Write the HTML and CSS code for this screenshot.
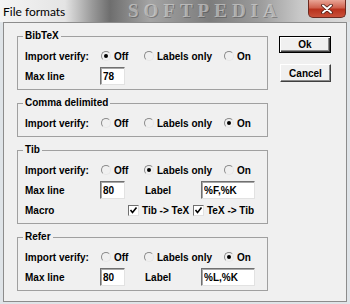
FILE: index.html
```html
<!DOCTYPE html>
<html lang="en">
<head>
    <meta charset="UTF-8">
    <title>File formats</title>
    <link rel="stylesheet" href="styles.css">
</head>
<body>
    <div class="window">
        <div class="titlebar">
            <span class="title">File formats</span>
            <span class="watermark">SOFTPEDIA</span>
            <span class="close">
                <svg width="12" height="10" viewBox="0 0 12 10">
                    <path d="M2 1.5 L10 8.5 M10 1.5 L2 8.5" stroke="#4a1a12" stroke-width="3.6" stroke-linecap="round"/>
                    <path d="M2 1.5 L10 8.5 M10 1.5 L2 8.5" stroke="#fff" stroke-width="2" stroke-linecap="round"/>
                </svg>
            </span>
        </div>

        <div class="client">
            <div class="groups">
                <!-- BibTeX -->
                <fieldset class="group">
                    <legend>BibTeX</legend>
                    <div class="row">
                        <span class="label">Import verify:</span>
                        <div class="choices">
                            <span class="radio checked"><span class="dot"></span>Off</span>
                            <span class="radio"><span class="dot"></span>Labels only</span>
                            <span class="radio"><span class="dot"></span>On</span>
                        </div>
                    </div>
                    <div class="row">
                        <span class="label">Max line</span>
                        <input class="field short" type="text" value="78">
                    </div>
                </fieldset>

                <!-- Comma delimited -->
                <fieldset class="group">
                    <legend>Comma delimited</legend>
                    <div class="row">
                        <span class="label">Import verify:</span>
                        <div class="choices">
                            <span class="radio"><span class="dot"></span>Off</span>
                            <span class="radio"><span class="dot"></span>Labels only</span>
                            <span class="radio checked"><span class="dot"></span>On</span>
                        </div>
                    </div>
                </fieldset>

                <!-- Tib -->
                <fieldset class="group">
                    <legend>Tib</legend>
                    <div class="row">
                        <span class="label">Import verify:</span>
                        <div class="choices">
                            <span class="radio"><span class="dot"></span>Off</span>
                            <span class="radio checked"><span class="dot"></span>Labels only</span>
                            <span class="radio"><span class="dot"></span>On</span>
                        </div>
                    </div>
                    <div class="row">
                        <span class="label">Max line</span>
                        <input class="field short" type="text" value="80">
                        <span class="field-label">Label</span>
                        <input class="field wide" type="text" value="%F,%K">
                    </div>
                    <div class="row">
                        <span class="label">Macro</span>
                        <div class="checks">
                            <span class="check"><span class="box"><svg width="9" height="9" viewBox="0 0 9 9"><path d="M1.5 4 L3.5 6.5 L7.5 1.5" fill="none" stroke="#000" stroke-width="1.6"/></svg></span>Tib -&gt; TeX</span>
                            <span class="check"><span class="box"><svg width="9" height="9" viewBox="0 0 9 9"><path d="M1.5 4 L3.5 6.5 L7.5 1.5" fill="none" stroke="#000" stroke-width="1.6"/></svg></span>TeX -&gt; Tib</span>
                        </div>
                    </div>
                </fieldset>

                <!-- Refer -->
                <fieldset class="group">
                    <legend>Refer</legend>
                    <div class="row">
                        <span class="label">Import verify:</span>
                        <div class="choices">
                            <span class="radio"><span class="dot"></span>Off</span>
                            <span class="radio"><span class="dot"></span>Labels only</span>
                            <span class="radio checked"><span class="dot"></span>On</span>
                        </div>
                    </div>
                    <div class="row">
                        <span class="label">Max line</span>
                        <input class="field short" type="text" value="80">
                        <span class="field-label">Label</span>
                        <input class="field wide" type="text" value="%L,%K">
                    </div>
                </fieldset>
            </div>

            <div class="buttons">
                <button class="btn default">Ok</button>
                <button class="btn cancel">Cancel</button>
            </div>
        </div>
    </div>
</body>
</html>
```

FILE: styles.css
```css
body {
    margin: 0;
    font-family: "Liberation Sans", Arial, sans-serif;
    font-size: 10px;
    font-weight: bold;
    color: #000;
}

.window {
    width: 350px;
    height: 304px;
    box-sizing: border-box;
    background: #dfe4e8;
    display: flex;
    flex-direction: column;
}

/* Title bar */
.titlebar {
    position: relative;
    flex: none;
    height: 22px;
    display: flex;
    align-items: center;
    background: linear-gradient(to right, #f4f4f4 0px, #e4e4e4 65px, #9a9a9a 92px, #6e6e6e 110px, #a4a4a4 150px, #7c7c7c 210px, #9c9c9c 260px, #c8c8c8 300px, #dcdcdc 350px);
}

.title {
    position: relative;
    z-index: 1;
    padding-left: 3px;
    font-family: Lato, "Liberation Sans", sans-serif;
    font-weight: normal;
    font-size: 12px;
    color: #000;
}

.watermark {
    position: absolute;
    left: 128px;
    top: 1px;
    font-family: "Liberation Serif", serif;
    font-size: 19px;
    line-height: 20px;
    font-weight: bold;
    letter-spacing: 5px;
    color: rgba(225, 225, 225, 0.55);
    text-shadow: 1px 1px 0 rgba(60, 60, 60, 0.4);
}

.close {
    position: absolute;
    right: 4px;
    top: 0;
    width: 38px;
    height: 18px;
    box-sizing: border-box;
    border: 1px solid #6b2a20;
    border-top: none;
    border-radius: 0 0 5px 5px;
    background: linear-gradient(#e9a596, #d0624f 45%, #b9321d 55%, #c9503a);
    display: flex;
    align-items: center;
    justify-content: center;
}

/* Client area */
.client {
    flex: 1;
    margin: 0 3px 2px 3px;
    border: 1px solid #8c8c8c;
    background: #f0f0f0;
    display: flex;
    gap: 11px;
    padding: 7px 0 0 13px;
}

.groups {
    width: 251px;
    display: flex;
    flex-direction: column;
    gap: 7px;
}

.group {
    margin: 0;
    padding: 4px 6px 3px 7px;
    border: 1px solid #a0a0a0;
}

.group legend {
    margin-left: -2px;
    padding: 0 2px;
    line-height: 12px;
}

.row {
    display: flex;
    align-items: center;
    height: 20px;
}

.label {
    flex: none;
    width: 75px;
}

.choices {
    display: grid;
    grid-template-columns: 43px 80px auto;
    padding-left: 1px;
}

.radio {
    display: flex;
    align-items: center;
    gap: 3px;
}

.dot {
    position: relative;
    width: 10px;
    height: 10px;
    box-sizing: border-box;
    border-radius: 50%;
    border: 1px solid;
    border-color: #8a8a8a #e6e6e6 #e6e6e6 #8a8a8a;
}

.radio.checked .dot::after {
    content: "";
    position: absolute;
    left: 2px;
    top: 2px;
    width: 4px;
    height: 4px;
    border-radius: 50%;
    background: #000;
}

.field {
    height: 18px;
    box-sizing: border-box;
    margin: 0;
    padding: 0 2px;
    border: 1px solid;
    border-color: #707070 #e2e2e2 #e2e2e2 #707070;
    box-shadow: inset 1px 1px 0 #a8a8a8;
    background: #fff;
    font: inherit;
    color: #000;
}

.short {
    width: 25px;
}

.wide {
    width: 54px;
}

.field-label {
    width: 56px;
    margin-left: 20px;
}

.checks {
    display: flex;
    margin-left: 28px;
}

.check {
    display: flex;
    align-items: center;
    gap: 3px;
    width: 65px;
}

.box {
    width: 11px;
    height: 11px;
    box-sizing: border-box;
    border: 1px solid;
    border-color: #707070 #e2e2e2 #e2e2e2 #707070;
    background: #fff;
    display: flex;
    align-items: center;
    justify-content: center;
}

/* Buttons */
.buttons {
    display: flex;
    flex-direction: column;
    margin-top: 6px;
}

.btn {
    width: 52px;
    height: 17px;
    padding: 0;
    background: #f0f0f0;
    font: inherit;
    color: #000;
    border: 1px solid;
    border-color: #fff #404040 #404040 #fff;
    box-shadow: inset -1px -1px 0 #8a8a8a;
}

.btn.default {
    border: 1px solid #000;
    box-shadow: inset 1px 1px 0 #fff, inset -1px -1px 0 #404040, inset -2px -2px 0 #8a8a8a;
}

.btn.cancel {
    width: 51px;
    height: 18px;
    margin-top: 11px;
    margin-left: 1px;
}
```
